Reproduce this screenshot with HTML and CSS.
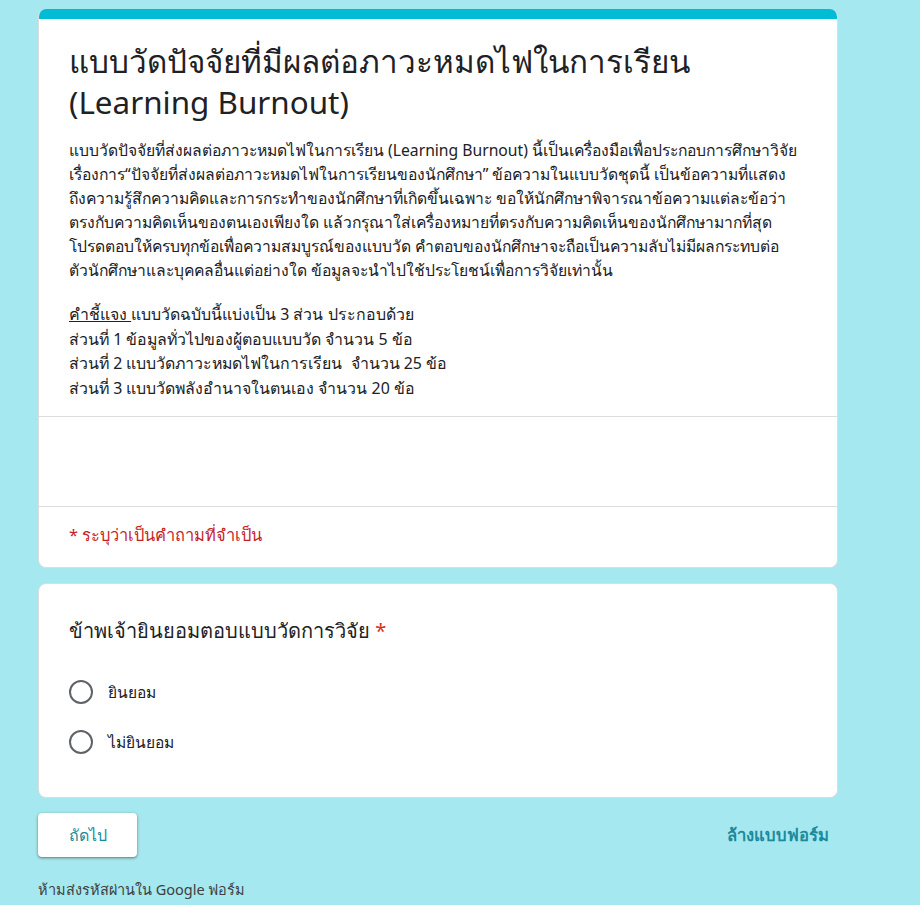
FILE: index.html
```html
<!DOCTYPE html>
<html lang="th">
<head>
<meta charset="utf-8">
<title>แบบวัดปัจจัยที่มีผลต่อภาวะหมดไฟในการเรียน</title>
<link rel="stylesheet" href="styles.css">
</head>
<body>
<div class="page">
  <div class="card header-card">
    <div class="bar"></div>
    <div class="head">
      <h1 class="title">แบบวัดปัจจัยที่มีผลต่อภาวะหมดไฟในการเรียน<br>(Learning Burnout)</h1>
      <p class="desc">แบบวัดปัจจัยที่ส่งผลต่อภาวะหมดไฟในการเรียน (Learning Burnout) นี้เป็นเครื่องมือเพื่อประกอบการศึกษาวิจัย<br>เรื่องการ“ปัจจัยที่ส่งผลต่อภาวะหมดไฟในการเรียนของนักศึกษา” ข้อความในแบบวัดชุดนี้ เป็นข้อความที่แสดง<br>ถึงความรู้สึกความคิดและการกระทำของนักศึกษาที่เกิดขึ้นเฉพาะ ขอให้นักศึกษาพิจารณาข้อความแต่ละข้อว่า<br>ตรงกับความคิดเห็นของตนเองเพียงใด แล้วกรุณาใส่เครื่องหมายที่ตรงกับความคิดเห็นของนักศึกษามากที่สุด<br>โปรดตอบให้ครบทุกข้อเพื่อความสมบูรณ์ของแบบวัด คำตอบของนักศึกษาจะถือเป็นความลับไม่มีผลกระทบต่อ<br>ตัวนักศึกษาและบุคคลอื่นแต่อย่างใด ข้อมูลจะนำไปใช้ประโยชน์เพื่อการวิจัยเท่านั้น</p>
      <p class="desc instr"><span class="ul">คำชี้แจง </span> แบบวัดฉบับนี้แบ่งเป็น 3 ส่วน ประกอบด้วย<br>ส่วนที่ 1 ข้อมูลทั่วไปของผู้ตอบแบบวัด จำนวน 5 ข้อ<br>ส่วนที่ 2 แบบวัดภาวะหมดไฟในการเรียน&nbsp; จำนวน 25 ข้อ<br>ส่วนที่ 3 แบบวัดพลังอำนาจในตนเอง จำนวน 20 ข้อ</p>
    </div>
    <div class="blank"></div>
    <div class="required-note">* ระบุว่าเป็นคำถามที่จำเป็น</div>
  </div>

  <div class="card question-card">
    <div class="question">ข้าพเจ้ายินยอมตอบแบบวัดการวิจัย <span class="star">*</span></div>
    <div class="options">
      <label class="option"><span class="radio"></span><span class="opt-label">ยินยอม</span></label>
      <label class="option"><span class="radio"></span><span class="opt-label">ไม่ยินยอม</span></label>
    </div>
  </div>

  <div class="actions">
    <button class="next">ถัดไป</button>
    <span class="clear">ล้างแบบฟอร์ม</span>
  </div>
  <div class="footer">ห้ามส่งรหัสผ่านใน Google ฟอร์ม</div>
</div>
</body>
</html>
```

FILE: styles.css
```css
html, body {
  margin: 0;
  padding: 0;
  background: #a6e8ef;
}
body {
  font-family: "Noto Sans", "Open Sans", sans-serif;
  color: #202124;
}
.page {
  width: 800px;
  margin-left: 38px;
  padding-top: 9px;
}
.card {
  background: #fff;
  border-radius: 8px;
  border: 1px solid #dadce0;
  box-sizing: border-box;
  overflow: hidden;
}
.header-card {
  border-top: none;
}
.bar {
  height: 10px;
  background: #00bcd4;
}
.head {
  padding: 21px 30px 16px 30px;
  border-bottom: 1px solid #dadce0;
}
.title {
  margin: 0;
  font-size: 31.4px;
  font-weight: 400;
  line-height: 41px;
  color: #202124;
}
.desc {
  margin: 16px 0 0 0;
  font-size: 15.7px;
  line-height: 24px;
  color: #202124;
}
.instr {
  margin-top: 20px;
  font-size: 15.9px;
  line-height: 24.6px;
}
.ul {
  text-decoration: underline;
}
.blank {
  height: 89px;
  border-bottom: 1px solid #dadce0;
}
.required-note {
  padding: 16px 30px 20px;
  font-size: 16.4px;
  line-height: 24px;
  color: #c5221f;
}
.question-card {
  margin-top: 15px;
  padding: 34px 30px 26px;
  height: 215px;
}
.question {
  font-size: 20px;
  line-height: 26px;
  color: #202124;
}
.star {
  color: #d93025;
}
.options {
  margin-top: 36px;
  display: flex;
  flex-direction: column;
  gap: 26px;
}
.option {
  display: flex;
  align-items: center;
  gap: 15px;
  height: 24px;
}
.radio {
  width: 20px;
  height: 20px;
  border: 2px solid #5f6368;
  border-radius: 50%;
  flex: none;
}
.opt-label {
  font-size: 15.6px;
  color: #202124;
}
.actions {
  margin-top: 15px;
  display: flex;
  align-items: center;
  justify-content: space-between;
  padding-right: 9px;
}
.next {
  width: 99px;
  height: 44px;
  background: #fff;
  border: none;
  border-radius: 4px;
  box-shadow: 0 1px 2px rgba(0,0,0,0.3), 0 1px 3px 1px rgba(0,0,0,0.15);
  font-family: inherit;
  font-size: 16px;
  color: #1a8a9a;
}
.clear {
  font-size: 16.6px;
  font-weight: 600;
  color: #1a8a9c;
}
.footer {
  margin-top: 21px;
  font-size: 14.5px;
  color: #3c4043;
}
```
